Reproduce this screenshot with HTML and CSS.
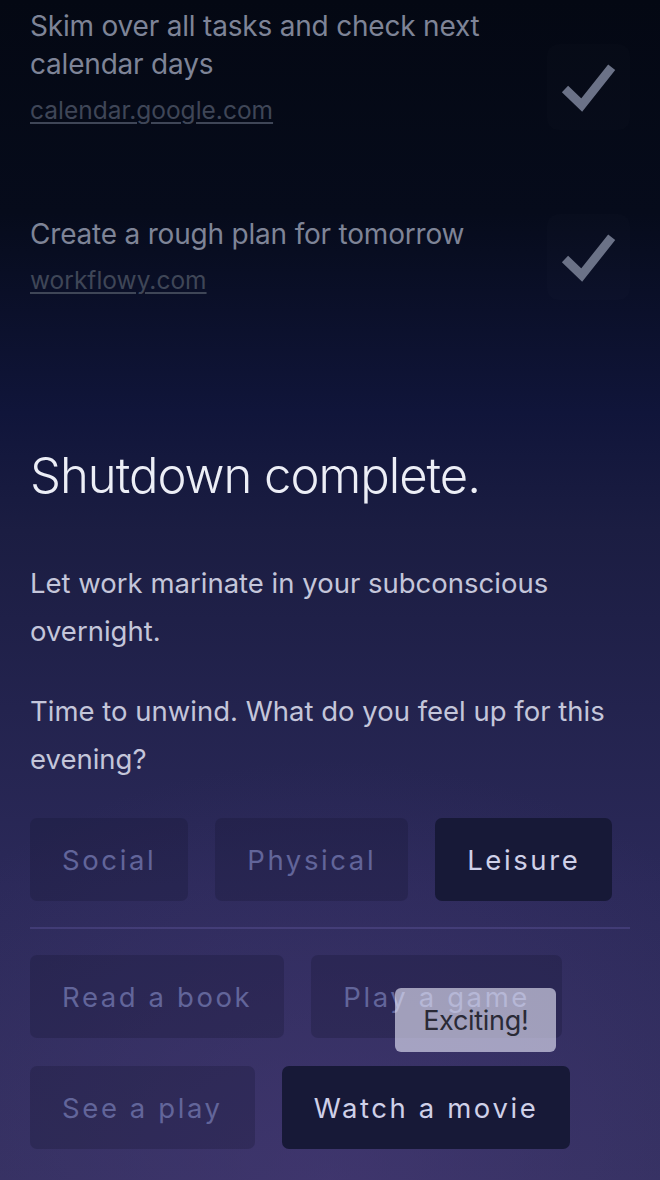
FILE: index.html
```html
<!DOCTYPE html>
<html lang="en">
<head>
<meta charset="utf-8">
<title>Shutdown complete</title>
<link rel="stylesheet" href="styles.css">
</head>
<body>
<main class="page">
  <section class="tasks">
    <div class="task">
      <div class="task-text">
        <p class="task-title">Skim over all tasks and check next calendar days</p>
        <a class="task-link" href="#">calendar.google.com</a>
      </div>
      <div class="check">
        <svg width="83" height="86" viewBox="0 0 83 86"><polyline points="18,45 34.7,61 64.7,23.3" fill="none" stroke="#6b7287" stroke-width="9"/></svg>
      </div>
    </div>
    <div class="task task-second">
      <div class="task-text">
        <p class="task-title">Create a rough plan for tomorrow</p>
        <a class="task-link" href="#">workflowy.com</a>
      </div>
      <div class="check">
        <svg width="83" height="86" viewBox="0 0 83 86"><polyline points="18,45 34.7,61 64.7,23.3" fill="none" stroke="#6b7287" stroke-width="9"/></svg>
      </div>
    </div>
  </section>

  <h1 class="heading">Shutdown complete.</h1>
  <p class="body">Let work marinate in your subconscious overnight.</p>
  <p class="body">Time to unwind. What do you feel up for this evening?</p>

  <div class="chips chips-first">
    <button class="chip">Social</button>
    <button class="chip">Physical</button>
    <button class="chip chip-active">Leisure</button>
  </div>
  <hr class="divider">
  <div class="chips">
    <button class="chip">Read a book</button>
    <button class="chip">Play a game<span class="tooltip">Exciting!</span></button>
    <button class="chip">See a play</button>
    <button class="chip chip-active">Watch a movie</button>
  </div>
</main>
</body>
</html>
```

FILE: styles.css
```css
* { box-sizing: border-box; }
html, body { margin: 0; padding: 0; }
body {
  width: 660px;
  height: 1180px;
  overflow: hidden;
  font-family: Inter, "Noto Sans", sans-serif;
  background:
    radial-gradient(ellipse 520px 420px at 50% 100%, rgba(72, 58, 120, 0.55), rgba(72, 58, 120, 0) 100%),
    linear-gradient(to bottom, #040813 0%, #060b1b 18%, #10153a 35%, #1b1d42 45%, #23234e 60%, #2b2959 75%, #33305f 100%);
}
.page { padding: 7px 30px 0; }

.tasks { display: flex; flex-direction: column; }
.task {
  display: flex;
  align-items: flex-end;
  justify-content: space-between;
}
.task-second { margin-top: 88px; }
.task-text { width: 480px; }
.task-title {
  margin: 0;
  font-size: 28px;
  line-height: 38px;
  color: #7e8497;
  letter-spacing: -0.2px;
}
.task-link {
  display: block;
  width: max-content;
  margin-top: 11px;
  font-size: 24.5px;
  line-height: 32px;
  color: #3f4657;
  text-decoration: underline;
  text-decoration-thickness: 1.5px;
  text-underline-offset: 3px;
}
.check {
  width: 83px;
  height: 86px;
  margin-bottom: -4px;
  border-radius: 12px;
  background: rgba(255, 255, 255, 0.011);
  flex: none;
}
.check svg { display: block; }

.heading {
  margin: 150px 0 0;
  font-size: 49px;
  line-height: 60px;
  font-weight: 300;
  color: #eceef6;
  letter-spacing: -1px;
}
.body {
  margin: 53px 0 0;
  font-size: 27.5px;
  line-height: 48px;
  color: #c4c6da;
}
.body + .body { margin-top: 32px; }

.chips {
  display: flex;
  flex-wrap: wrap;
  gap: 28px 27px;
}
.chips-first { margin-top: 35px; }
.chip {
  position: relative;
  height: 83px;
  padding: 0 32px;
  border: none;
  border-radius: 7px;
  background: rgba(20, 20, 50, 0.28);
  color: #62659a;
  font-family: Inter, "Noto Sans", sans-serif;
  font-size: 27.5px;
  letter-spacing: 2.6px;
  font-weight: 400;
}
.chip-active {
  background: #171937;
  color: #cfd0e8;
}
.divider {
  margin: 26px 0;
  border: none;
  height: 2px;
  background: rgba(120, 110, 190, 0.26);
}
.tooltip {
  position: absolute;
  left: 84px;
  top: 33px;
  width: 161px;
  height: 64px;
  border-radius: 6px;
  background: rgba(238, 238, 255, 0.6);
  color: #2a2a36;
  font-size: 27px;
  letter-spacing: -0.3px;
  display: flex;
  align-items: center;
  justify-content: center;
}
```
